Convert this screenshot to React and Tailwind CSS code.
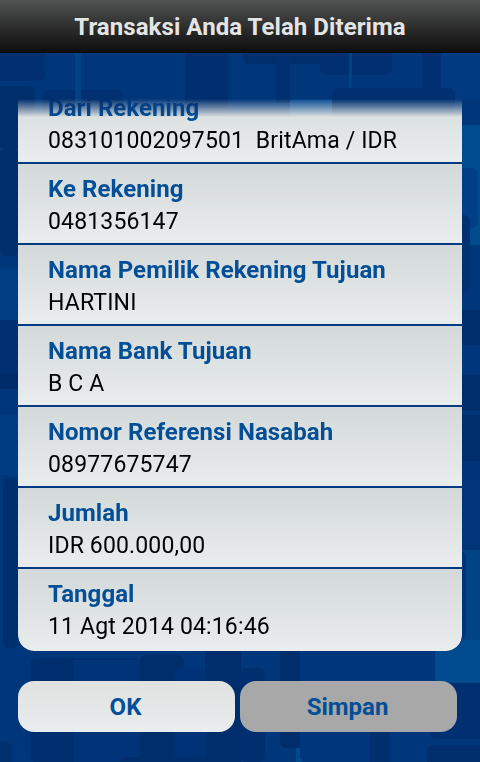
const rows = [
  { label: 'Dari Rekening', value: '083101002097501  BritAma / IDR' },
  { label: 'Ke Rekening', value: '0481356147' },
  { label: 'Nama Pemilik Rekening Tujuan', value: 'HARTINI' },
  { label: 'Nama Bank Tujuan', value: 'B C A' },
  { label: 'Nomor Referensi Nasabah', value: '08977675747' },
  { label: 'Jumlah', value: 'IDR 600.000,00' },
  { label: 'Tanggal', value: '11 Agt 2014 04:16:46' },
]

// wallpaper blocks: x, y, w, h, rx, colour
const blocks = [
  [-10, 40, 55, 41, 6, '#003071'],
  [-10, 86, 45, 62, 6, '#002f6e'],
  [43, 90, 80, 30, 6, '#003071'],
  [75, 53, 6, 50, 0, '#004283'],
  [185, 53, 43, 60, 0, '#002f6f'],
  [243, 40, 87, 24, 6, '#002f6e'],
  [320, 40, 72, 35, 6, '#003071'],
  [276, 53, 14, 50, 0, '#003071'],
  [349, 53, 3, 47, 0, '#004283'],
  [422, 53, 19, 50, 0, '#003071'],
  [441, 53, 39, 47, 0, '#003b81'],
  [332, 88, 123, 30, 6, '#003071'],
  [290, 100, 42, 20, 0, '#0a4d95'],
  [462, 125, 18, 120, 0, '#004a8e'],
  [450, 168, 28, 60, 6, '#003f85'],
  [450, 215, 20, 78, 6, '#003173'],
  [462, 310, 18, 35, 0, '#002e6d'],
  [462, 375, 18, 36, 0, '#002d6b'],
  [462, 415, 18, 46, 0, '#002d6b'],
  [462, 461, 18, 20, 0, '#003377'],
  [462, 481, 18, 70, 0, '#003679'],
  [462, 550, 18, 90, 0, '#004486'],
  [455, 551, 11, 88, 6, '#003478'],
  [0, 148, 18, 108, 6, '#002f6e'],
  [0, 268, 18, 52, 0, '#003d83'],
  [0, 320, 18, 60, 0, '#003071'],
  [0, 373, 18, 16, 0, '#002d6a'],
  [0, 415, 18, 60, 0, '#003c81'],
  [3, 478, 15, 170, 6, '#002f6f'],
  [0, 650, 18, 112, 0, '#00377b'],
  [30, 658, 110, 104, 6, '#002f6f'],
  [73, 660, 67, 102, 0, '#003478'],
  [140, 655, 44, 107, 6, '#002d6b'],
  [175, 668, 30, 94, 6, '#003277'],
  [205, 650, 36, 112, 0, '#002d6b'],
  [-10, 742, 22, 30, 6, '#002f6e'],
  [120, 757, 100, 20, 6, '#002d6b'],
  [280, 640, 45, 108, 6, '#002d6b'],
  [240, 668, 25, 94, 6, '#002f6f'],
  [296, 748, 6, 14, 0, '#004a8e'],
  [300, 651, 135, 108, 0, '#00377c'],
  [370, 732, 20, 30, 0, '#002f6e'],
  [435, 640, 45, 44, 0, '#004a8e'],
  [430, 683, 60, 56, 6, '#003071'],
  [427, 745, 60, 30, 6, '#002d6b'],
]

function Row({ label, value, last }) {
  return (
    <div className={`h-[81px] shrink-0 pl-[30px] pt-[11px] bg-gradient-to-b from-[#d3d8d8] to-[#e9eded] ${last ? 'h-[82px]' : 'border-b-2 border-[#003a80]'}`}>
      <div className="text-[24px] leading-[28px] font-bold tracking-[0.07px] text-[#034f97]">{label}</div>
      <div className="text-[23px] leading-[28px] mt-[5px] tracking-[0.15px] text-black whitespace-pre">{value}</div>
    </div>
  )
}

export default function App() {
  return (
    <div className="relative w-[480px] h-[762px] overflow-hidden bg-[#00377b] font-['Roboto',sans-serif]">
      <svg className="absolute inset-0" width="480" height="762" viewBox="0 0 480 762">
        {blocks.map(([x, y, w, h, rx, fill], i) => (
          <rect key={i} x={x} y={y} width={w} height={h} rx={rx} fill={fill} />
        ))}
      </svg>

      <div className="relative flex flex-col h-full">
        <div className="h-[53px] flex items-center justify-center bg-gradient-to-b from-[#525453] to-[#0d0d0d] text-[24px] tracking-[0.07px] font-bold text-[#e4e4e4]">
          Transaksi Anda Telah Diterima
        </div>

        <div className="mt-[46px] mx-[18px] h-[552px] overflow-hidden rounded-b-[16px] [mask-image:linear-gradient(to_bottom,transparent,black_18px)]">
          <div className="flex flex-col -mt-[16px]">
            {rows.map((r, i) => (
              <Row key={r.label} {...r} last={i === rows.length - 1} />
            ))}
          </div>
        </div>

        <div className="flex gap-[5px] mt-[30px] mx-[18px]">
          <button className="w-[217px] h-[51px] pr-[2px] rounded-[16px] bg-gradient-to-b from-[#e0e1e1] to-[#e9eded] text-[24px] font-bold text-[#034f97]">
            OK
          </button>
          <button className="w-[217px] h-[51px] pr-[2px] rounded-[16px] bg-[#a8a8a8] text-[24px] font-bold text-[#034f97]">
            Simpan
          </button>
        </div>
      </div>
    </div>
  )
}
